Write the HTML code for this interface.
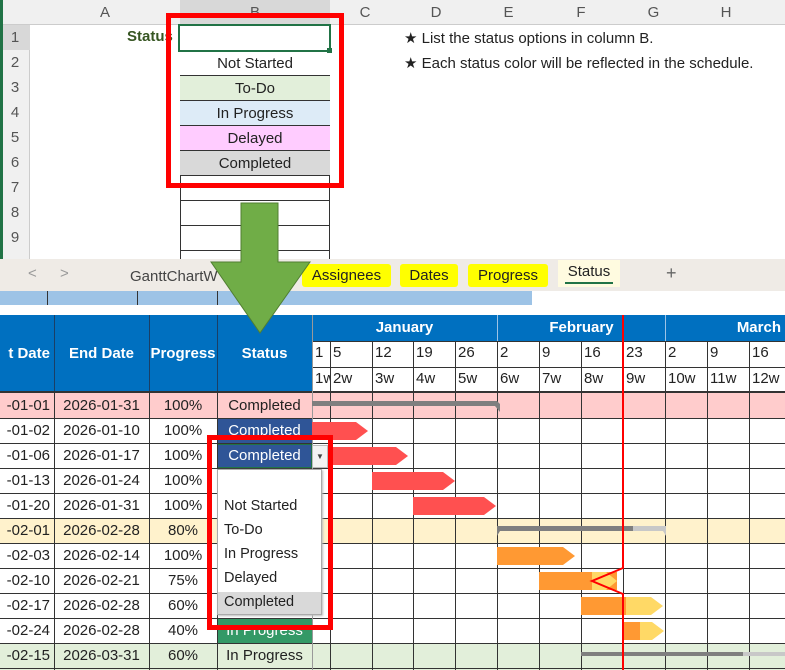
<!DOCTYPE html>
<html><head><meta charset="utf-8"><style>
*{margin:0;padding:0;box-sizing:border-box}
body{width:785px;height:670px;overflow:hidden;position:relative;background:#fff;font-family:"Liberation Sans",Arial,sans-serif;font-size:15px;color:#222}
.a{position:absolute}
.c{position:absolute;text-align:center;line-height:25px;white-space:nowrap;overflow:hidden}
.hl{position:absolute;height:1px;background:#333}
.vl{position:absolute;width:1px;background:#333}
.gh{position:absolute;color:#555;font-size:15px;text-align:center;line-height:25px}
</style></head><body>
<div class="a" style="left:0;top:0;width:785px;height:25px;background:#f0f0f0;border-bottom:1px solid #ccc"></div>
<div class="a" style="left:180px;top:0;width:150px;height:25px;background:#d8d8d8"></div>
<div class="a" style="left:0;top:25px;width:30px;height:235px;background:#f0f0f0;border-right:1px solid #ccc"></div>
<div class="a" style="left:0;top:25px;width:30px;height:25px;background:#d8d8d8"></div>
<div class="a" style="left:0;top:0;width:3px;height:260px;background:#217346"></div>
<div class="gh" style="left:30px;top:0;width:150px">A</div>
<div class="gh" style="left:180px;top:0;width:150px">B</div>
<div class="gh" style="left:330px;top:0;width:70px">C</div>
<div class="gh" style="left:400px;top:0;width:72px">D</div>
<div class="gh" style="left:472px;top:0;width:73px">E</div>
<div class="gh" style="left:545px;top:0;width:72px">F</div>
<div class="gh" style="left:617px;top:0;width:73px">G</div>
<div class="gh" style="left:690px;top:0;width:72px">H</div>
<div class="gh" style="left:0;top:25px;width:30px">1</div>
<div class="gh" style="left:0;top:50px;width:30px">2</div>
<div class="gh" style="left:0;top:75px;width:30px">3</div>
<div class="gh" style="left:0;top:100px;width:30px">4</div>
<div class="gh" style="left:0;top:125px;width:30px">5</div>
<div class="gh" style="left:0;top:150px;width:30px">6</div>
<div class="gh" style="left:0;top:175px;width:30px">7</div>
<div class="gh" style="left:0;top:200px;width:30px">8</div>
<div class="gh" style="left:0;top:225px;width:30px">9</div>
<div class="a" style="left:127px;top:28px;font-weight:bold;color:#375623;font-size:15px">Status</div>
<div class="a" style="left:180px;top:50px;width:150px;height:210px;border-left:1px solid #333;border-right:1px solid #333"></div>
<div class="c" style="left:180px;top:51px;width:150px;height:24px;background:#fff">Not Started</div>
<div class="c" style="left:180px;top:76px;width:150px;height:24px;background:#e2efda">To-Do</div>
<div class="c" style="left:180px;top:101px;width:150px;height:24px;background:#ddebf7">In Progress</div>
<div class="c" style="left:180px;top:126px;width:150px;height:24px;background:#ffccff">Delayed</div>
<div class="c" style="left:180px;top:151px;width:150px;height:24px;background:#d9d9d9">Completed</div>
<div class="hl" style="left:180px;top:75px;width:150px"></div><div class="hl" style="left:180px;top:100px;width:150px"></div><div class="hl" style="left:180px;top:125px;width:150px"></div><div class="hl" style="left:180px;top:150px;width:150px"></div><div class="hl" style="left:180px;top:175px;width:150px"></div><div class="hl" style="left:180px;top:200px;width:150px"></div><div class="hl" style="left:180px;top:225px;width:150px"></div><div class="hl" style="left:180px;top:250px;width:150px"></div>
<div class="a" style="left:178px;top:24px;width:153px;height:28px;border:2px solid #217346"></div>
<div class="a" style="left:327px;top:48px;width:5px;height:5px;background:#217346"></div>
<div class="a" style="left:404px;top:29px;font-size:15px">★ List the status options in column B.</div>
<div class="a" style="left:404px;top:54px;font-size:15px">★ Each status color will be reflected in the schedule.</div>
<div class="a" style="left:166px;top:13px;width:178px;height:175px;border:5px solid #f00"></div>
<div class="a" style="left:0;top:259px;width:785px;height:32px;background:#efebe6"></div>
<div class="a" style="left:28px;top:265px;color:#999;font-size:15px">&lt;</div>
<div class="a" style="left:60px;top:265px;color:#999;font-size:15px">&gt;</div>
<div class="a" style="left:130px;top:268px;color:#444;font-size:15px">GanttChartW</div>
<div class="a" style="left:302px;top:264px;width:89px;height:23px;background:#ff0;border-radius:3px;text-align:center;line-height:23px;font-size:15px">Assignees</div>
<div class="a" style="left:400px;top:264px;width:58px;height:23px;background:#ff0;border-radius:3px;text-align:center;line-height:23px;font-size:15px">Dates</div>
<div class="a" style="left:468px;top:264px;width:80px;height:23px;background:#ff0;border-radius:3px;text-align:center;line-height:23px;font-size:15px">Progress</div>
<div class="a" style="left:558px;top:260px;width:62px;height:27px;background:#fffbe0;text-align:center;line-height:24px;font-size:15px">Status</div>
<div class="a" style="left:565px;top:282px;width:48px;height:2px;background:#217346"></div>
<div class="a" style="left:666px;top:263px;font-size:18px;color:#666">+</div>
<div class="a" style="left:0;top:291px;width:532px;height:14px;background:#9dc3e6"></div>
<div class="vl" style="left:47px;top:291px;height:14px"></div><div class="vl" style="left:137px;top:291px;height:14px"></div><div class="vl" style="left:217px;top:291px;height:14px"></div>
<div class="a" style="left:0;top:315px;width:312px;height:77px;background:#0070c0"></div>
<div class="a" style="left:312px;top:315px;width:473px;height:26px;background:#0070c0"></div>
<div class="c" style="left:0;top:315px;width:54px;height:77px;line-height:77px;color:#fff;font-weight:bold;text-align:right;padding-right:4px">t Date</div>
<div class="c" style="left:54px;top:315px;width:95px;height:77px;line-height:77px;color:#fff;font-weight:bold">End Date</div>
<div class="c" style="left:149px;top:315px;width:68px;height:77px;line-height:77px;color:#fff;font-weight:bold">Progress</div>
<div class="c" style="left:217px;top:315px;width:95px;height:77px;line-height:77px;color:#fff;font-weight:bold">Status</div>
<div class="vl" style="left:54px;top:315px;height:77px;background:#1a3f66"></div><div class="vl" style="left:149px;top:315px;height:77px;background:#1a3f66"></div><div class="vl" style="left:217px;top:315px;height:77px;background:#1a3f66"></div>
<div class="c" style="left:312px;top:315px;width:185px;height:26px;color:#fff;font-weight:bold;line-height:26px">January</div>
<div class="c" style="left:497px;top:315px;width:168px;height:26px;color:#fff;font-weight:bold;line-height:26px;border-left:1px solid #9dc3e6">February</div>
<div class="c" style="left:665px;top:315px;width:120px;height:26px;color:#fff;font-weight:bold;line-height:26px;border-left:1px solid #9dc3e6;text-align:right;padding-right:4px">March</div>
<div class="a" style="left:0;top:393px;width:785px;height:25px;background:#ffcccc"></div>
<div class="a" style="left:0;top:518px;width:785px;height:25px;background:#fff2cc"></div>
<div class="a" style="left:0;top:643px;width:785px;height:27px;background:#e2efda"></div>
<div class="a" style="left:217px;top:419px;width:95px;height:24px;background:#2f5597"></div>
<div class="a" style="left:217px;top:444px;width:95px;height:24px;background:#2f5597;border:1px solid #217346"></div>
<div class="a" style="left:217px;top:619px;width:95px;height:24px;background:#339966"></div>
<div class="hl" style="left:312px;top:341px;width:473px"></div>
<div class="hl" style="left:312px;top:367px;width:473px"></div>
<div class="a" style="left:0;top:391px;width:785px;height:2px;background:#333"></div>
<div class="hl" style="left:0;top:418px;width:785px"></div><div class="hl" style="left:0;top:443px;width:785px"></div><div class="hl" style="left:0;top:468px;width:785px"></div><div class="hl" style="left:0;top:493px;width:785px"></div><div class="hl" style="left:0;top:518px;width:785px"></div><div class="hl" style="left:0;top:543px;width:785px"></div><div class="hl" style="left:0;top:568px;width:785px"></div><div class="hl" style="left:0;top:593px;width:785px"></div><div class="hl" style="left:0;top:618px;width:785px"></div><div class="hl" style="left:0;top:643px;width:785px"></div><div class="hl" style="left:0;top:668px;width:785px"></div>
<div class="vl" style="left:54px;top:392px;height:278px"></div><div class="vl" style="left:149px;top:392px;height:278px"></div><div class="vl" style="left:217px;top:392px;height:278px"></div>
<div class="vl" style="left:312px;top:315px;height:355px;background:#999"></div>
<div class="vl" style="left:330px;top:341px;height:329px"></div>
<div class="vl" style="left:372px;top:341px;height:329px"></div><div class="vl" style="left:413px;top:341px;height:329px"></div><div class="vl" style="left:455px;top:341px;height:329px"></div><div class="vl" style="left:497px;top:341px;height:329px"></div><div class="vl" style="left:539px;top:341px;height:329px"></div><div class="vl" style="left:581px;top:341px;height:329px"></div><div class="vl" style="left:623px;top:341px;height:329px"></div><div class="vl" style="left:665px;top:341px;height:329px"></div><div class="vl" style="left:707px;top:341px;height:329px"></div><div class="vl" style="left:749px;top:341px;height:329px"></div>
<div class="a" style="top:344px;left:315px">1</div>
<div class="a" style="top:344px;left:333px">5</div><div class="a" style="top:344px;left:375px">12</div><div class="a" style="top:344px;left:416px">19</div><div class="a" style="top:344px;left:458px">26</div><div class="a" style="top:344px;left:500px">2</div><div class="a" style="top:344px;left:542px">9</div><div class="a" style="top:344px;left:584px">16</div><div class="a" style="top:344px;left:626px">23</div><div class="a" style="top:344px;left:668px">2</div><div class="a" style="top:344px;left:710px">9</div><div class="a" style="top:344px;left:752px">16</div>
<div class="a" style="top:370px;left:315px;width:15px;overflow:hidden">1w</div>
<div class="a" style="top:370px;left:333px">2w</div><div class="a" style="top:370px;left:375px">3w</div><div class="a" style="top:370px;left:416px">4w</div><div class="a" style="top:370px;left:458px">5w</div><div class="a" style="top:370px;left:500px">6w</div><div class="a" style="top:370px;left:542px">7w</div><div class="a" style="top:370px;left:584px">8w</div><div class="a" style="top:370px;left:626px">9w</div><div class="a" style="top:370px;left:668px">10w</div><div class="a" style="top:370px;left:710px">11w</div><div class="a" style="top:370px;left:752px">12w</div>
<div style="position:absolute;left:0;top:393px;font-size:15px">
<div class="c" style="left:0;top:0;width:54px;text-align:right;padding-right:4px">-01-01</div><div class="c" style="left:54px;top:0;width:95px">2026-01-31</div><div class="c" style="left:149px;top:0;width:68px">100%</div><div class="c" style="left:217px;top:0;width:95px">Completed</div>
<div class="c" style="left:0;top:25px;width:54px;text-align:right;padding-right:4px">-01-02</div><div class="c" style="left:54px;top:25px;width:95px">2026-01-10</div><div class="c" style="left:149px;top:25px;width:68px">100%</div><div class="c" style="left:217px;top:25px;width:95px;color:#fff">Completed</div>
<div class="c" style="left:0;top:50px;width:54px;text-align:right;padding-right:4px">-01-06</div><div class="c" style="left:54px;top:50px;width:95px">2026-01-17</div><div class="c" style="left:149px;top:50px;width:68px">100%</div><div class="c" style="left:217px;top:50px;width:95px;color:#fff">Completed</div>
<div class="c" style="left:0;top:75px;width:54px;text-align:right;padding-right:4px">-01-13</div><div class="c" style="left:54px;top:75px;width:95px">2026-01-24</div><div class="c" style="left:149px;top:75px;width:68px">100%</div>
<div class="c" style="left:0;top:100px;width:54px;text-align:right;padding-right:4px">-01-20</div><div class="c" style="left:54px;top:100px;width:95px">2026-01-31</div><div class="c" style="left:149px;top:100px;width:68px">100%</div>
<div class="c" style="left:0;top:125px;width:54px;text-align:right;padding-right:4px">-02-01</div><div class="c" style="left:54px;top:125px;width:95px">2026-02-28</div><div class="c" style="left:149px;top:125px;width:68px">80%</div>
<div class="c" style="left:0;top:150px;width:54px;text-align:right;padding-right:4px">-02-03</div><div class="c" style="left:54px;top:150px;width:95px">2026-02-14</div><div class="c" style="left:149px;top:150px;width:68px">100%</div>
<div class="c" style="left:0;top:175px;width:54px;text-align:right;padding-right:4px">-02-10</div><div class="c" style="left:54px;top:175px;width:95px">2026-02-21</div><div class="c" style="left:149px;top:175px;width:68px">75%</div>
<div class="c" style="left:0;top:200px;width:54px;text-align:right;padding-right:4px">-02-17</div><div class="c" style="left:54px;top:200px;width:95px">2026-02-28</div><div class="c" style="left:149px;top:200px;width:68px">60%</div>
<div class="c" style="left:0;top:225px;width:54px;text-align:right;padding-right:4px">-02-24</div><div class="c" style="left:54px;top:225px;width:95px">2026-02-28</div><div class="c" style="left:149px;top:225px;width:68px">40%</div><div class="c" style="left:217px;top:225px;width:95px;color:#fff">In Progress</div>
<div class="c" style="left:0;top:250px;width:54px;text-align:right;padding-right:4px">-02-15</div><div class="c" style="left:54px;top:250px;width:95px">2026-03-31</div><div class="c" style="left:149px;top:250px;width:68px">60%</div><div class="c" style="left:217px;top:250px;width:95px">In Progress</div>
</div>
<svg class="a" style="left:0;top:0" width="785" height="670">
<polygon points="312,401 497,401 500,404 500,412 495,406 312,406" fill="#7f7f7f"/>
<polygon points="312,422 356,422 368,431 356,440 312,440" fill="#ff5050"/>
<polygon points="330,447 396,447 408,456 396,465 330,465" fill="#ff5050"/>
<polygon points="372,472 443,472 455,481 443,490 372,490" fill="#ff5050"/>
<polygon points="413,497 484,497 496,506 484,515 413,515" fill="#ff5050"/>
<polygon points="497,526 633,526 633,531 500,531 497,536" fill="#7f7f7f"/>
<polygon points="633,526 666,526 666,536 663,531 633,531" fill="#c8c8c8"/>
<polygon points="497,547 563,547 575,556 563,565 497,565" fill="#ff9933"/>
<polygon points="539,572 617,572 617,590 539,590" fill="#ff9933"/>
<polygon points="592,572 606,572 617,581 606,590 592,590" fill="#ffd966"/>
<polygon points="581,597 651,597 663,606 651,615 581,615" fill="#ffd966"/>
<rect x="581" y="597" width="45" height="18" fill="#ff9933"/>
<polygon points="624,622 652,622 664,631 652,640 624,640" fill="#ffd966"/>
<rect x="624" y="622" width="16" height="18" fill="#ff9933"/>
<polygon points="581,652 785,652 785,656 581,656 581,661" fill="#7f7f7f"/>
<rect x="743" y="652" width="42" height="4" fill="#c8c8c8"/>
<polyline points="623,315 623,568 592,581 623,594 623,670" fill="none" stroke="#f00" stroke-width="2"/>
<polygon points="241,203 278,203 278,262 310,262 260,333 211,262 241,262" fill="#70ad47" stroke="#507e32" stroke-width="1"/>
</svg>
<div class="a" style="left:312px;top:445px;width:16px;height:23px;background:#f3f3f3;border:1px solid #bbb;font-size:8px;text-align:center;line-height:22px;color:#444">▼</div>
<div class="a" style="left:217px;top:469px;width:105px;height:146px;background:#fff;border:1px solid #aaa;box-shadow:1px 1px 2px #bbb;font-size:14.5px">
<div class="a" style="left:6px;top:28px">Not Started</div>
<div class="a" style="left:6px;top:52px">To-Do</div>
<div class="a" style="left:6px;top:76px">In Progress</div>
<div class="a" style="left:6px;top:100px">Delayed</div>
<div class="a" style="left:0;top:122px;width:103px;height:22px;background:#d9d9d9"></div>
<div class="a" style="left:6px;top:124px">Completed</div>
</div>
<div class="a" style="left:207px;top:435px;width:126px;height:195px;border:5px solid #f00"></div>
</body></html>
